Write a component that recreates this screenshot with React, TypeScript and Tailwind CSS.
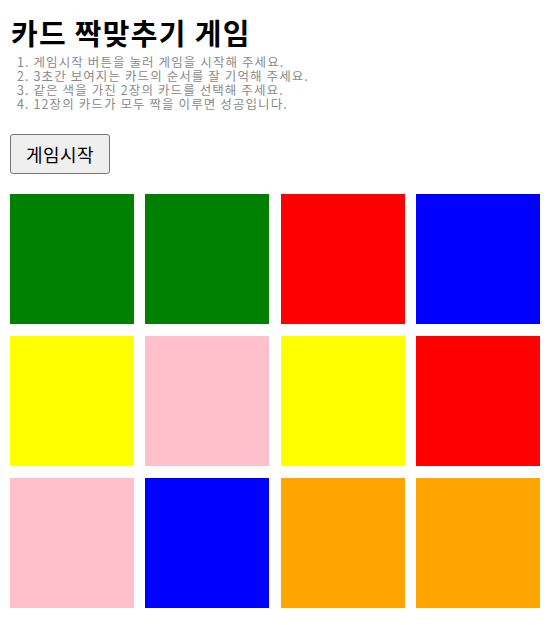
import React from "react";

const colors = [
  "bg-[#008000]", "bg-[#008000]", "bg-[#ff0000]", "bg-[#0000ff]",
  "bg-[#ffff00]", "bg-[#ffc0cb]", "bg-[#ffff00]", "bg-[#ff0000]",
  "bg-[#ffc0cb]", "bg-[#0000ff]", "bg-[#ffa500]", "bg-[#ffa500]",
];

export default function App() {
  return (
    <div
      className="min-h-[625px] w-[553px] bg-white px-[10px] pt-[13px]"
      style={{ fontFamily: '"Noto Sans CJK KR", "Noto Sans", sans-serif' }}
    >
      <h1 className="pl-[1px] text-[29px] font-bold leading-[38px] tracking-[1.3px] text-black">카드 짝맞추기 게임</h1>
      <ol className="mt-[4px] pl-[7px] text-[12.5px] leading-[14px] tracking-[1.1px] text-[#8a8a8a]">
        <li>1. 게임시작 버튼을 눌러 게임을 시작해 주세요.</li>
        <li>2. 3초간 보여지는 카드의 순서를 잘 기억해 주세요.</li>
        <li>3. 같은 색을 가진 2장의 카드를 선택해 주세요.</li>
        <li>4. 12장의 카드가 모두 짝을 이루면 성공입니다.</li>
      </ol>
      <button className="mt-[23px] flex h-[40px] w-[100px] items-center justify-center rounded-[3px] border border-[#767676] bg-[#efefef] text-[18px] tracking-[0.5px] text-black">
        게임시작
      </button>
      <div className="mt-[20px] grid grid-cols-[124px_124px_124px_124px] gap-x-[11.33px] gap-y-[12px]">
        {colors.map((c, i) => (
          <div key={i} className={`h-[130px] w-[124px] ${c}`} />
        ))}
      </div>
    </div>
  );
}
